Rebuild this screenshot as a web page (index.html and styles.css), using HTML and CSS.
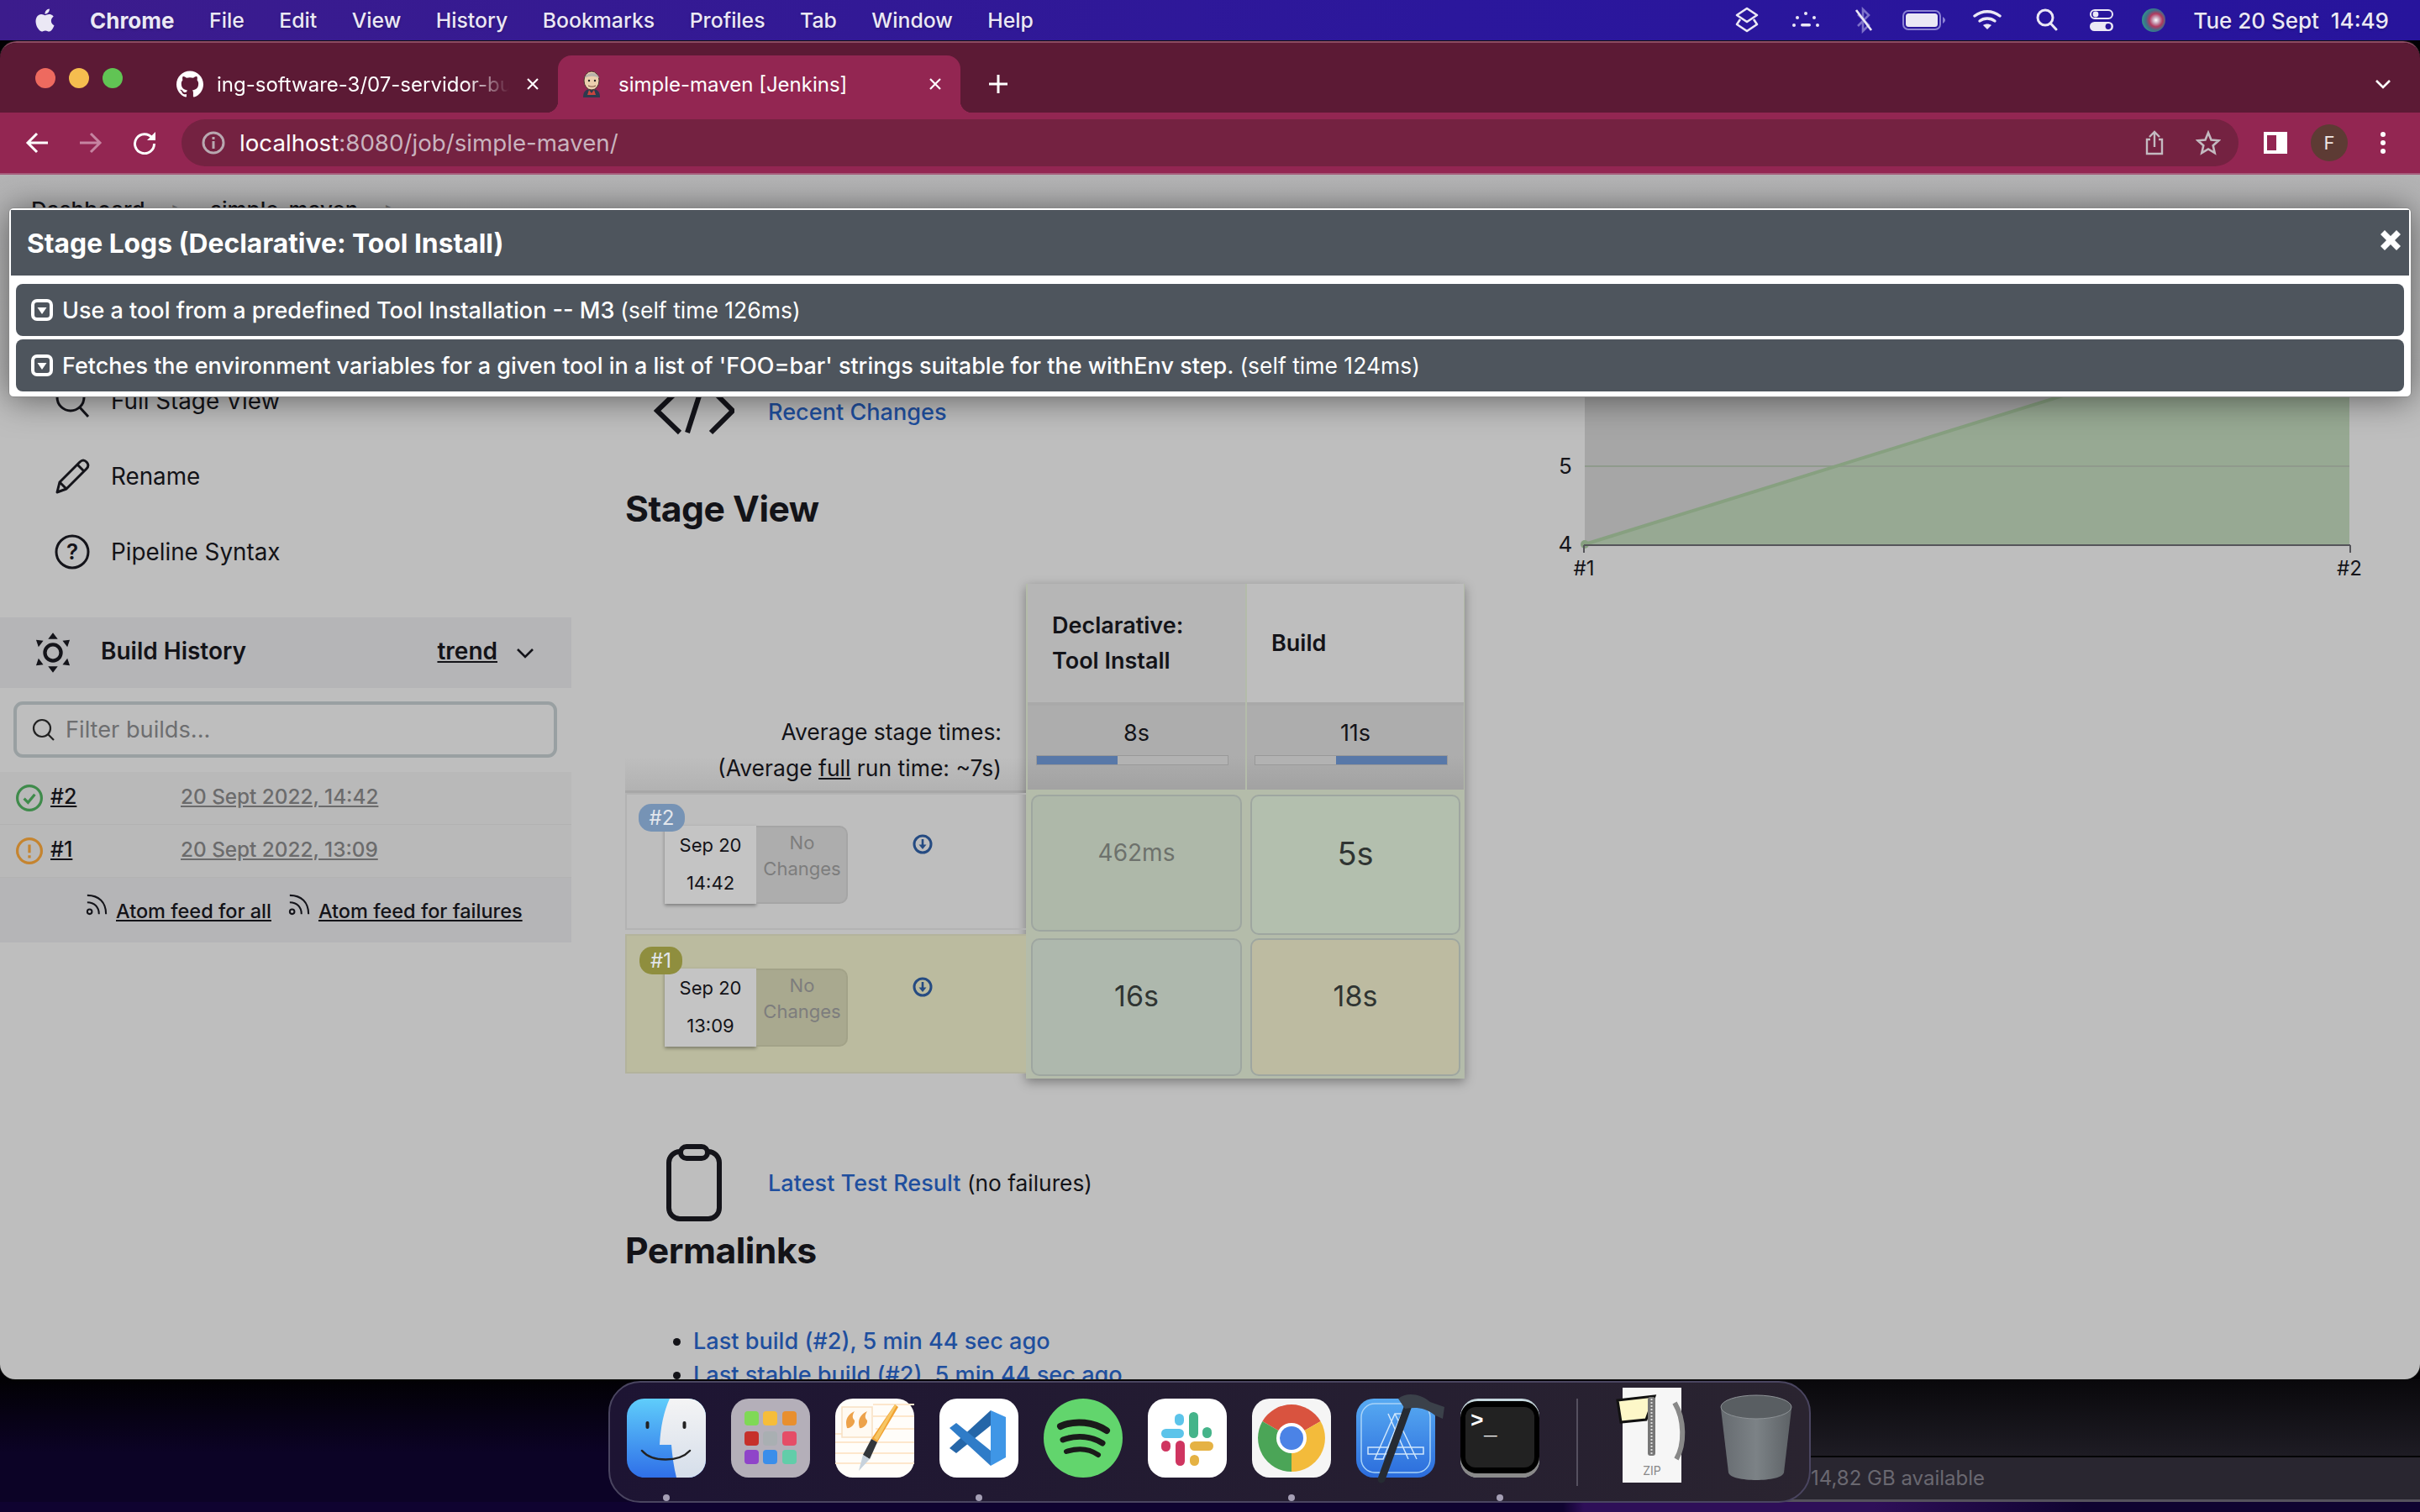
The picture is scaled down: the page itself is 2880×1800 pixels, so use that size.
FILE: index.html
```html
<!DOCTYPE html>
<html lang="en">
<head>
<meta charset="utf-8">
<title>simple-maven [Jenkins]</title>
<link rel="stylesheet" href="styles.css">
</head>
<body>
<header class="menubar">
  <svg class="apple" viewBox="0 0 24 24"><path d="M12.152 6.896c-.948 0-2.415-1.078-3.96-1.04-2.04.027-3.91 1.183-4.961 3.014-2.117 3.675-.546 9.103 1.519 12.09 1.013 1.454 2.208 3.09 3.792 3.039 1.52-.065 2.09-.987 3.935-.987 1.831 0 2.35.987 3.96.948 1.637-.026 2.676-1.48 3.676-2.948 1.156-1.688 1.636-3.325 1.662-3.415-.039-.013-3.182-1.221-3.22-4.857-.026-3.04 2.48-4.494 2.597-4.559-1.429-2.09-3.623-2.324-4.39-2.376-2-.156-3.675 1.09-4.61 1.09zM15.53 3.83c.843-1.012 1.4-2.427 1.245-3.83-1.207.052-2.662.805-3.532 1.818-.78.896-1.454 2.338-1.273 3.714 1.338.104 2.715-.688 3.559-1.701"/></svg>
  <nav class="menus">
    <span class="app">Chrome</span><span>File</span><span>Edit</span><span>View</span><span>History</span><span>Bookmarks</span><span>Profiles</span><span>Tab</span><span>Window</span><span>Help</span>
  </nav>
  <div class="status">
    <svg width="30" height="32" viewBox="0 0 30 32" fill="none" stroke="#ebe8f5" stroke-width="2.6" stroke-linejoin="round"><path d="M15 2 27 10 15 18 3 10Z"/><path d="M7 15 3 21 15 29 27 21 23 15"/></svg>
    <svg width="32" height="24" viewBox="0 0 32 24" fill="#ebe8f5"><circle cx="16" cy="4" r="2"/><circle cx="6" cy="9" r="2"/><circle cx="26" cy="9" r="2"/><circle cx="2" cy="18" r="2"/><circle cx="30" cy="18" r="2"/><rect x="10" y="16" width="12" height="3.5" rx="1.7"/></svg>
    <svg width="22" height="32" viewBox="0 0 22 32" fill="none" stroke="#7d71c9" stroke-width="2.6"><path d="M4 9 17 22 10 29V3L17 10 4 23"/><path d="M2 4 20 28" stroke="#ebe8f5"/></svg>
    <svg width="52" height="24" viewBox="0 0 52 24"><rect x="1" y="1" width="44" height="22" rx="6" fill="none" stroke="#8c82d4" stroke-width="2"/><rect x="4" y="4" width="38" height="16" rx="3.5" fill="#ebe8f5"/><path d="M48 8c2 1 3 3 3 4s-1 3-3 4z" fill="#8c82d4"/></svg>
    <svg width="34" height="24" viewBox="0 0 34 24" fill="none" stroke="#ebe8f5" stroke-width="3.4" stroke-linecap="round"><path d="M2 7C11 0 23 0 32 7"/><path d="M8 13c5-4 13-4 18 0"/><path d="M17 23l-5-5c3-2 7-2 10 0z" fill="#ebe8f5" stroke="none"/></svg>
    <svg width="26" height="28" viewBox="0 0 26 28" fill="none" stroke="#ebe8f5" stroke-width="3"><circle cx="11" cy="11" r="9"/><path d="M17.5 18 24 25" stroke-linecap="round"/></svg>
    <svg width="28" height="26" viewBox="0 0 28 26"><rect x="1" y="1" width="26" height="10" rx="5" fill="none" stroke="#ebe8f5" stroke-width="2"/><circle cx="7" cy="6" r="3.4" fill="#ebe8f5"/><rect y="15" width="28" height="11" rx="5.5" fill="#ebe8f5"/><circle cx="22" cy="20.500" r="3.4" fill="#29149a"/></svg>
    <svg width="28" height="30" viewBox="0 0 28 30"><defs><radialGradient id="siri" cx="60%" cy="50%" r="62%"><stop offset="0" stop-color="#fff"/><stop offset=".22" stop-color="#c9a3b8"/><stop offset=".45" stop-color="#b03a5e"/><stop offset=".7" stop-color="#3f6f8a"/><stop offset="1" stop-color="#2f9a8a"/></radialGradient></defs><circle cx="14" cy="15" r="14" fill="url(#siri)"/></svg>
  </div>
  <span class="clock">Tue 20 Sept&nbsp; 14:49</span>
</header>

<aside class="backwin">
  <div class="back-body"></div>
  <div class="back-status">14,82 GB available</div>
</aside>

<main class="window">
  <div class="tabstrip">
    <div class="lights"><i class="red"></i><i class="yellow"></i><i class="green"></i></div>
    <div class="tab">
      <svg class="favicon" viewBox="0 0 24 24" fill="#fff"><path d="M12 .297c-6.63 0-12 5.373-12 12 0 5.303 3.438 9.8 8.205 11.385.6.113.82-.258.82-.577 0-.285-.01-1.04-.015-2.04-3.338.724-4.042-1.61-4.042-1.61C4.422 18.07 3.633 17.7 3.633 17.7c-1.087-.744.084-.729.084-.729 1.205.084 1.838 1.236 1.838 1.236 1.07 1.835 2.809 1.305 3.495.998.108-.776.417-1.305.76-1.605-2.665-.3-5.466-1.332-5.466-5.93 0-1.31.465-2.38 1.235-3.22-.135-.303-.54-1.523.105-3.176 0 0 1.005-.322 3.3 1.23.96-.267 1.98-.399 3-.405 1.02.006 2.04.138 3 .405 2.28-1.552 3.285-1.23 3.285-1.23.645 1.653.24 2.873.12 3.176.765.84 1.23 1.91 1.23 3.22 0 4.61-2.805 5.625-5.475 5.92.42.36.81 1.096.81 2.22 0 1.606-.015 2.896-.015 3.286 0 .315.21.69.825.57C20.565 22.092 24 17.592 24 12.297c0-6.627-5.373-12-12-12"/></svg>
      <span class="tab-title fade">ing-software-3/07-servidor-build</span>
      <svg class="tab-close" viewBox="0 0 16 16" stroke="#fff" stroke-width="2.200"><path d="M2 2 14 14M14 2 2 14"/></svg>
    </div>
    <div class="tab active">
      <svg class="favicon" viewBox="0 0 32 32"><path d="M6 32c0-7 3-10 10-10s10 3 10 10z" fill="#2c3a4e"/><path d="M13 23l3 4 3-4 2 6h-10z" fill="#c9463f"/><ellipse cx="16" cy="12" rx="9" ry="11" fill="#eccfae" stroke="#4a3a30"/><path d="M8 9c1-7 15-9 17 0-5-3-12-3-17 0z" fill="#b8b2aa"/><circle cx="13" cy="12" r="1.200" fill="#222"/><circle cx="20" cy="12" r="1.200" fill="#222"/><path d="M12 18c3 1.500 6 1.500 9 0" stroke="#7a4a3a" fill="none"/></svg>
      <span class="tab-title">simple-maven [Jenkins]</span>
      <svg class="tab-close" viewBox="0 0 16 16" stroke="#fff" stroke-width="2.200"><path d="M2 2 14 14M14 2 2 14"/></svg>
    </div>
    <svg class="newtab" viewBox="0 0 24 24" stroke="#fff" stroke-width="3"><path d="M12 1V23M1 12H23"/></svg>
    <svg class="tabmenu" viewBox="0 0 20 12" fill="none" stroke="#fff" stroke-width="2.600"><path d="M2 2 10 10 18 2"/></svg>
  </div>

  <div class="toolbar">
    <span class="tb-slot"><svg width="28" height="28" viewBox="0 0 28 28" fill="none" stroke="#fff" stroke-width="3"><path d="M27 14H3M14 3 3 14 14 25"/></svg></span>
    <span class="tb-slot"><svg width="28" height="28" viewBox="0 0 28 28" fill="none" stroke="#c684a1" stroke-width="3"><path d="M1 14H25M14 3 25 14 14 25"/></svg></span>
    <span class="tb-slot"><svg width="28" height="28" viewBox="0 0 28 28" fill="none" stroke="#fff" stroke-width="3"><path d="M23 8a11.500 11.500 0 1 0 2.500 7"/><path d="M27 1v10H17z" fill="#fff" stroke="none"/></svg></span>
    <div class="omnibox">
      <svg class="info" viewBox="0 0 28 28"><circle cx="14" cy="14" r="12" fill="none" stroke="#b8a8b0" stroke-width="3"/><rect x="12.500" y="12" width="3" height="9" fill="#b8a8b0"/><rect x="12.500" y="7" width="3" height="3" fill="#b8a8b0"/></svg>
      <span class="url"><b>localhost</b>:8080/job/simple-maven/</span>
      <span class="tb-slot"><svg width="24" height="30" viewBox="0 0 24 30" fill="none" stroke="#c3bac0" stroke-width="2.400"><path d="M7 11H3V28H21V11H17M12 20V2M6 8 12 2 18 8"/></svg></span>
      <span class="tb-slot"><svg width="30" height="30" viewBox="0 0 30 30" fill="none" stroke="#c3bac0" stroke-width="2.600"><path d="M15 3 18.500 11.500 27.500 12.300 20.700 18.300 22.700 27 15 22.500 7.300 27 9.300 18.300 2.500 12.300 11.500 11.500Z"/></svg></span>
    </div>
    <span class="tb-slot"><svg width="28" height="26" viewBox="0 0 28 26"><rect x="2" y="2" width="24" height="22" fill="none" stroke="#fff" stroke-width="4"/><rect x="15" y="2" width="11" height="22" fill="#fff"/></svg></span>
    <span class="tb-slot"><span class="avatar">F</span></span>
    <span class="tb-slot"><svg width="6" height="26" viewBox="0 0 6 26" fill="#fff"><circle cx="3" cy="3" r="3"/><circle cx="3" cy="13" r="3"/><circle cx="3" cy="23" r="3"/></svg></span>
  </div>

  <div class="page">
    <div class="crumbs"><span>Dashboard</span><i>&gt;</i><span>simple-maven</span><i>&gt;</i></div>
    <div class="content">
      <section class="sidebar">
        <a class="task"><svg viewBox="0 0 44 44" fill="none" stroke="#14141a" stroke-width="3"><circle cx="20" cy="18" r="16"/><path d="M31 30 41 41"/></svg>Full Stage View</a>
        <a class="task"><svg viewBox="0 0 44 44" fill="none" stroke="#14141a" stroke-width="3" stroke-linejoin="round"><path d="M4 41 7 29 31 5c3-3 6-2 8 0s3 5 0 8L15 37Z"/><path d="M28 8 36 16M7 29 15 37"/></svg>Rename</a>
        <a class="task"><svg viewBox="0 0 44 44"><circle cx="22" cy="22" r="19" fill="none" stroke="#14141a" stroke-width="3"/><text x="22" y="31" text-anchor="middle" class="qmark">?</text></svg>Pipeline Syntax</a>

        <div class="bh-head">
          <svg viewBox="0 0 44 50" fill="#14141a"><circle cx="22" cy="25" r="10" fill="none" stroke="#14141a" stroke-width="4.500"/><path d="M22 0 28 8H16ZM22 50 28 42H16ZM1 9 10 10 4 18ZM43 9 34 10 40 18ZM1 41 10 40 4 32ZM43 41 34 40 40 32Z"/></svg>
          <span class="bh-title">Build History</span>
          <a class="bh-trend">trend</a>
          <svg class="chev" viewBox="0 0 22 14" fill="none" stroke="#14141a" stroke-width="2.600"><path d="M2 2 11 11 20 2"/></svg>
        </div>
        <div class="filter">
          <svg viewBox="0 0 28 28" fill="none" stroke="#222" stroke-width="2.200"><circle cx="12" cy="12" r="10"/><path d="M19 19 26 26"/></svg>
          <span>Filter builds...</span>
        </div>
        <div class="build">
          <svg viewBox="0 0 30 30" fill="none" stroke="#3f8b4b" stroke-width="3"><circle cx="15" cy="15" r="13.500"/><path d="M9 15.500 13.500 20 21 11"/></svg>
          <a class="num">#2</a><a class="when">20 Sept 2022, 14:42</a>
        </div>
        <div class="build">
          <svg viewBox="0 0 30 30" fill="none" stroke="#c5842f" stroke-width="3"><circle cx="15" cy="15" r="13.500"/><path d="M15 8V17M15 20V23"/></svg>
          <a class="num">#1</a><a class="when">20 Sept 2022, 13:09</a>
        </div>
        <div class="feeds">
          <svg viewBox="0 0 28 28" fill="none" stroke="#14141a" stroke-width="2.200"><circle cx="5" cy="23" r="3"/><path d="M2 11c9 0 15 6 15 15M2 2c15 0 24 9 24 24"/></svg><a>Atom feed for all</a>
          <svg viewBox="0 0 28 28" fill="none" stroke="#14141a" stroke-width="2.200"><circle cx="5" cy="23" r="3"/><path d="M2 11c9 0 15 6 15 15M2 2c15 0 24 9 24 24"/></svg><a>Atom feed for failures</a>
        </div>
      </section>

      <section class="main">
        <div class="linkrow">
          <span class="linkicon"><svg width="96" height="64" viewBox="0 0 96 64" fill="none" stroke="#14141a" stroke-width="6"><path d="M31 5 4 31 31 57"/><path d="M40 57 58 1"/><path d="M68 5 94 31 68 57"/></svg></span>
          <a class="lnk">Recent Changes</a>
        </div>
        <h2 class="stage-title">Stage View</h2>

        <div class="stage">
          <div class="stage-left">
            <div class="avg-label">Average stage times:<br>(Average <u>full</u> run time: ~7s)</div>
            <div class="run first">
              <span class="badge blue">#2</span>
              <div class="stamp"><span>Sep 20</span><span>14:42</span></div>
              <div class="nochg">No<br>Changes</div>
              <svg class="dl" viewBox="0 0 24 24"><circle cx="12" cy="12" r="10" fill="none" stroke="#254b82" stroke-width="3"/><path d="M12 6V15" stroke="#254b82" stroke-width="2.600"/><path d="M7.500 12.500H16.500L12 18Z" fill="#254b82"/></svg>
            </div>
            <div class="run warn">
              <span class="badge olive">#1</span>
              <div class="stamp"><span>Sep 20</span><span>13:09</span></div>
              <div class="nochg">No<br>Changes</div>
              <svg class="dl" viewBox="0 0 24 24"><circle cx="12" cy="12" r="10" fill="none" stroke="#254b82" stroke-width="3"/><path d="M12 6V15" stroke="#254b82" stroke-width="2.600"/><path d="M7.500 12.500H16.500L12 18Z" fill="#254b82"/></svg>
            </div>
          </div>
          <div class="stage-box">
            <div class="col one">
              <div class="head">Declarative:<br>Tool Install</div>
              <div class="avg"><span>8s</span><div class="bar"><i class="fill-a"></i></div></div>
              <div class="cell c11"><span class="dim">462ms</span></div>
              <div class="cell c21"><span>16s</span></div>
            </div>
            <div class="col two">
              <div class="head">Build</div>
              <div class="avg"><span>11s</span><div class="bar"><i class="fill-b"></i></div></div>
              <div class="cell c12"><span class="big">5s</span></div>
              <div class="cell c22"><span>18s</span></div>
            </div>
          </div>
        </div>

        <div class="linkrow test">
          <span class="linkicon"><svg width="66" height="92" viewBox="0 0 66 92" fill="none" stroke="#14141a" stroke-width="6"><rect x="3" y="9" width="60" height="80" rx="13"/><rect x="17" y="3" width="32" height="14" rx="7" fill="#bebebe"/></svg></span>
          <span><a class="lnk">Latest Test Result</a> (no failures)</span>
        </div>
        <h2 class="perma">Permalinks</h2>
        <ul class="plist">
          <li><a class="lnk">Last build (#2), 5 min 44 sec ago</a></li>
          <li><a class="lnk">Last stable build (#2), 5 min 44 sec ago</a></li>
        </ul>
      </section>

      <section class="trend">
        <svg width="1120" height="400" viewBox="0 0 1120 400">
          <rect x="126" y="0" width="910" height="358" fill="#a6a6a6"/>
          <path d="M126 358 1036 75V358Z" fill="#97a993"/>
          <path d="M126 265H1036" stroke="#8f9a8c" stroke-width="2"/>
          <path d="M126 358 1036 75" stroke="#87a080" stroke-width="4"/>
          <circle cx="126" cy="358" r="5" fill="#87a080"/>
          <path d="M125 359H1037M125 359V368M1037 359V368" fill="none" stroke="#55555a" stroke-width="2"/>
          <text x="103" y="367" class="axis" text-anchor="middle">4</text>
          <text x="103" y="274" class="axis" text-anchor="middle">5</text>
          <text x="125" y="395" class="axis small" text-anchor="middle">#1</text>
          <text x="1036" y="395" class="axis small" text-anchor="middle">#2</text>
        </svg>
      </section>
    </div>

    <div class="modal">
      <div class="modal-head">
        <span>Stage Logs (Declarative: Tool Install)</span>
        <svg viewBox="0 0 26 24" fill="#fff"><path d="M1 5 6 0 13 7 20 0 25 5 18 12 25 19 20 24 13 17 6 24 1 19 8 12Z"/></svg>
      </div>
      <div class="log">
        <svg viewBox="0 0 26 26"><rect x="2" y="2" width="22" height="22" rx="5" fill="none" stroke="#fff" stroke-width="4"/><path d="M7.500 10H18.500L13 18Z" fill="#fff"/></svg>
        <span>Use a tool from a predefined Tool Installation -- M3</span><small>(self time 126ms)</small>
      </div>
      <div class="log">
        <svg viewBox="0 0 26 26"><rect x="2" y="2" width="22" height="22" rx="5" fill="none" stroke="#fff" stroke-width="4"/><path d="M7.500 10H18.500L13 18Z" fill="#fff"/></svg>
        <span>Fetches the environment variables for a given tool in a list of 'FOO=bar' strings suitable for the withEnv step.</span><small>(self time 124ms)</small>
      </div>
    </div>
  </div>
</main>

<footer class="dock">
  <span class="dock-item on"><svg viewBox="0 0 94 94"><defs><linearGradient id="fb" x1="0" y1="0" x2="0" y2="1"><stop offset="0" stop-color="#5fcdfb"/><stop offset="1" stop-color="#2f6fe8"/></linearGradient><linearGradient id="fw" x1="0" y1="0" x2="0" y2="1"><stop offset="0" stop-color="#f4f4f5"/><stop offset="1" stop-color="#d5deea"/></linearGradient></defs><rect width="94" height="94" rx="21" fill="url(#fb)"/><path d="M51 0H73A21 21 0 0 1 94 21V73A21 21 0 0 1 73 94H59C56 82 54 68 53 55H39C40 34 44 15 51 0Z" fill="url(#fw)"/><rect x="22.500" y="27" width="4" height="9" rx="2" fill="#222"/><rect x="66.500" y="27" width="4" height="9" rx="2" fill="#222"/><path d="M18 62C30 76 62 76 75 62" fill="none" stroke="#222" stroke-width="2.500" stroke-linecap="round"/></svg></span>
  <span class="dock-item"><svg viewBox="0 0 94 94"><rect width="94" height="94" rx="21" fill="#b4afb9"/><rect x="16" y="15" width="17" height="17" rx="4" fill="#7fd956"/><rect x="38" y="15" width="17" height="17" rx="4" fill="#f6bd3a"/><rect x="61" y="15" width="17" height="17" rx="4" fill="#e88f2e"/><rect x="16" y="39" width="17" height="17" rx="4" fill="#c6302a"/><rect x="38" y="39" width="17" height="17" rx="4" fill="#a9afb2"/><rect x="61" y="39" width="17" height="17" rx="4" fill="#e54d67"/><rect x="16" y="61" width="17" height="17" rx="4" fill="#8f44c9"/><rect x="38" y="61" width="17" height="17" rx="4" fill="#3a8eea"/><rect x="61" y="61" width="17" height="17" rx="4" fill="#62cda9"/></svg></span>
  <span class="dock-item"><svg viewBox="0 0 94 94"><rect width="94" height="94" rx="21" fill="#fffdf9"/><path d="M45 7H94M45 21H94M48 36H94M0 42H40M0 52H94M0 65H94M0 77H94" stroke="#fde7cc" stroke-width="2"/><rect x="8" y="10" width="36" height="36" fill="#fffaf2" stroke="#f8dfc2" stroke-width="1.500"/><path d="M14 35c-3-10 1-16 9-20-3 5-3 8 0 11 1 5-6 10-9 9zM29 35c-3-10 1-16 9-20-3 5-3 8 0 11 1 5-6 10-9 9z" fill="#eda24a"/><path d="M71 7 75 10 50 52 43 48Z" fill="#f0a030"/><path d="M71 7 73 8.500 50 50 46 47Z" fill="#f7c664"/><path d="M43 48 50 52 41 72 33 67Z" fill="#33363a"/><path d="M33 67 41 72 28 86Z" fill="#c7d2dc"/></svg></span>
  <span class="dock-item on"><svg viewBox="0 0 94 94"><rect width="94" height="94" rx="21" fill="#fff"/><path d="M61 14V32L20 65 12 59Z" fill="#2566a8"/><path d="M12 35 20 29 61 62V80Z" fill="#2f7cc8"/><path d="M61 14 79 22V70L61 80Z" fill="#3f96e6"/></svg></span>
  <span class="dock-item"><svg viewBox="0 0 94 94"><circle cx="47" cy="47" r="47" fill="#62d56d"/><g fill="none" stroke="#1a1a1a" stroke-linecap="round"><path d="M20 33C38 25 60 28 75 38" stroke-width="8"/><path d="M23 49C40 43 57 45 70 53" stroke-width="7"/><path d="M27 63C42 58 55 60 65 67" stroke-width="6"/></g></svg></span>
  <span class="dock-item"><svg viewBox="0 0 94 94"><rect width="94" height="94" rx="21" fill="#fff"/><rect x="16" y="36" width="27" height="11" rx="5.500" fill="#5cc4ea"/><rect x="32" y="18" width="11" height="14" rx="5.500" fill="#5cc4ea"/><rect x="49" y="16" width="11" height="31" rx="5.500" fill="#45b48a"/><rect x="65" y="34" width="11" height="13" rx="5.500" fill="#45b48a"/><rect x="50" y="51" width="28" height="11" rx="5.500" fill="#e5b244"/><rect x="50" y="67" width="11" height="13" rx="5.500" fill="#e5b244"/><rect x="33" y="50" width="11" height="30" rx="5.500" fill="#cf3560"/><rect x="16" y="50" width="11" height="13" rx="5.500" fill="#cf3560"/></svg></span>
  <span class="dock-item on"><svg viewBox="0 0 94 94"><rect width="94" height="94" rx="21" fill="#f5f5f5"/><path d="M47 47 12.400 27A40 40 0 0 1 81.600 27Z" fill="#d9533f"/><path d="M47 47 12.400 27A40 40 0 0 0 47 87Z" fill="#4ba557"/><path d="M47 47 81.600 27A40 40 0 0 1 47 87Z" fill="#f3bb3b"/><circle cx="47" cy="47" r="18" fill="#fff"/><circle cx="47" cy="47" r="14" fill="#4b83e6"/></svg></span>
  <span class="dock-item"><svg viewBox="0 0 94 94"><defs><linearGradient id="xc" x1="0" y1="0" x2="0" y2="1"><stop offset="0" stop-color="#57aaf2"/><stop offset="1" stop-color="#2b6cdc"/></linearGradient></defs><rect width="94" height="94" rx="21" fill="url(#xc)"/><rect x="6" y="6" width="82" height="82" rx="16" fill="none" stroke="#a9d4f8" stroke-width="1.500"/><g fill="none" stroke="#cfe6fb" stroke-width="1.500"><path d="M22 72 46 18 54 18 32 72ZM72 72 46 18M62 72 38 18M14 58H80V66H14Z"/></g><path d="M30 96 62 8" stroke="#262b33" stroke-width="9" stroke-linecap="round"/><path d="M50 0C60-8 76-6 88 4L105 10 103 24 94 20C82 10 70 10 58 12Z" fill="#3b414a"/></svg></span>
  <span class="dock-item on"><svg viewBox="0 0 94 94"><rect width="94" height="94" rx="21" fill="#c5d7dd"/><rect y="3" width="94" height="91" rx="20" fill="#8a8a8a"/><rect y="3" width="94" height="86" rx="20" fill="#000"/><rect x="6" y="10" width="82" height="72" rx="12" fill="#222"/><text x="12" y="34" class="term">&gt;</text><text x="28" y="42" class="term">_</text></svg></span>
  <i class="dock-sep"></i>
  <span class="dock-item"><svg viewBox="0 0 94 94"><path d="M12 -13H82V100H12Z" fill="#f6f6f6"/><path d="M74 5C86 25 86 55 76 72" fill="none" stroke="#888" stroke-width="6"/><path d="M6 2 50 -3 40 25 10 28Z" fill="#fdf7c8" stroke="#111" stroke-width="3"/><rect x="42" y="-2" width="9" height="70" rx="3" fill="#777"/><path d="M46.500 0V66" stroke="#ddd" stroke-width="2" stroke-dasharray="2 2"/><text x="47" y="91" text-anchor="middle" class="zip">ZIP</text></svg></span>
  <span class="dock-item"><svg viewBox="0 0 94 94"><defs><linearGradient id="tr" x1="0" y1="0" x2="1" y2="0"><stop offset="0" stop-color="#666b70"/><stop offset=".5" stop-color="#7c8286"/><stop offset="1" stop-color="#5d6266"/></linearGradient></defs><path d="M5 12 14 88C16 100 78 100 80 88L89 12Z" fill="url(#tr)"/><ellipse cx="47" cy="10" rx="42" ry="14" fill="#595e62" stroke="#8d9296" stroke-width="1"/></svg></span>
</footer>
</body>
</html>
```

FILE: styles.css
```css
* { box-sizing: border-box; }
html, body { margin: 0; padding: 0; }
body {
  position: relative;
  width: 2880px;
  height: 1800px;
  overflow: hidden;
  font-family: Inter, "Liberation Sans", sans-serif;
  color: #131318;
  background:
    linear-gradient(90deg, #0f0330 1860px, #2e0f58 1885px, #2e0f58 2230px, #0f0330 2480px) bottom / 100% 12px no-repeat,
    linear-gradient(180deg, #020104 1642px, #0c0326 1730px);
}
a { color: inherit; }

/* menu bar */
.menubar {
  height: 48px;
  display: flex;
  align-items: center;
  padding-left: 40px;
  color: #ebe8f5;
  font-size: 24.800px;
  font-weight: 500;
  background: linear-gradient(90deg, #3c1c8c, #2b179c 60%, #27149c);
  text-shadow: 0 1px 3px rgba(0,0,0,.25);
}
.apple { width: 27px; height: 32px; fill: #ebe8f5; }
.menus { display: flex; gap: 41.500px; margin-left: 40px; }
.app { font-weight: 700; font-size: 26px; }
.status {
  display: grid;
  grid-template-columns: 70px 69px 69px 76px 74px 67px 63px 62px;
  justify-items: center;
  align-items: center;
  margin-left: auto;
}
.clock { margin: 0 37px 0 16px; white-space: nowrap; font-size: 26px; }

/* window behind */
.backwin {
  position: absolute;
  left: 2000px;
  top: 1642px;
  width: 880px;
  height: 146px;
  display: flex;
  flex-direction: column;
}
.back-body { flex: 1; background: linear-gradient(180deg, #09080b, #1e1c24); }
.back-status {
  height: 55px;
  border-top: 2px solid #050506;
  border-bottom: 3px solid #55525c;
  background: #292630;
  color: #6a6870;
  font-size: 24px;
  font-weight: 400;
  line-height: 50px;
  padding-left: 155px;
}

/* browser window */
.window {
  position: absolute;
  left: 0;
  top: 49px;
  width: 2880px;
  height: 1593px;
  display: flex;
  flex-direction: column;
  overflow: hidden;
  border-radius: 20px 20px 18px 18px;
  border-top: 2px solid #8b4a63;
  box-shadow: 0 0 0 1px #111;
}
.tabstrip {
  height: 83px;
  flex: none;
  display: flex;
  align-items: flex-end;
  background: #5c1a35;
  color: #fff;
  font-size: 24px;
}
.lights { display: flex; gap: 16px; align-self: flex-start; padding: 30px 0 0 42px; width: 188px; }
.lights i { width: 24px; height: 24px; border-radius: 50%; }
.red { background: #ee6a5f; }
.yellow { background: #f5bd4f; }
.green { background: #61c454; }
.tab {
  position: relative;
  width: 476px;
  height: 68px;
  display: flex;
  align-items: center;
  padding: 0 22px 0 22px;
}
.tab.active {
  width: 479px;
  background: #932652;
  border-radius: 16px 16px 0 0;
  padding-left: 24px;
}
.tab.active::before, .tab.active::after {
  content: "";
  position: absolute;
  bottom: 0;
  width: 14px;
  height: 14px;
}
.tab.active::before { left: -14px; background: radial-gradient(circle at 0 0, transparent 14px, #932652 14.500px); }
.tab.active::after { right: -14px; background: radial-gradient(circle at 100% 0, transparent 14px, #932652 14.500px); }
.favicon { width: 32px; height: 32px; flex: none; }
.tab-title { margin-left: 16px; flex: 1; overflow: hidden; white-space: nowrap; }
.fade { mask-image: linear-gradient(90deg, #000 85%, transparent); }
.tab-close { width: 16px; height: 16px; flex: none; margin-left: 20px; }
.newtab { width: 24px; height: 24px; margin: 0 0 22px 33px; }
.tabmenu { width: 20px; height: 12px; margin: 0 34px 28px auto; }

.toolbar {
  height: 74px;
  flex: none;
  display: flex;
  align-items: center;
  padding: 0 12px;
  background: #932652;
  border-bottom: 2px solid #a65e7c;
}
.tb-slot { width: 64px; height: 56px; display: flex; align-items: center; justify-content: center; flex: none; }
.omnibox {
  flex: 1;
  height: 56px;
  margin: 0 12px;
  padding: 0 4px 0 24px;
  display: flex;
  align-items: center;
  background: #742241;
  border-radius: 28px;
}
.info { width: 28px; height: 28px; flex: none; }
.url { flex: 1; margin-left: 17px; font-size: 27.700px; color: #c9b3be; }
.url b { font-weight: 400; color: #fff; }
.avatar {
  width: 44px; height: 44px;
  border-radius: 50%;
  background: #5d3b34;
  color: #efe7e4;
  font-size: 22px;
  line-height: 44px;
  text-align: center;
}

/* page */
.page {
  position: relative;
  flex: 1;
  min-height: 0;
  overflow: hidden;
  background: linear-gradient(180deg, #b4b4b5, #bebebe 260px);
  font-size: 27px;
}
.crumbs {
  height: 82px;
  display: flex;
  align-items: center;
  gap: 30px;
  padding-left: 37px;
  font-size: 26px;
  font-weight: 500;
}
.crumbs i { font-style: normal; color: #777; }
.content { display: flex; }

.sidebar { width: 680px; flex: none; padding-top: 142px; }
.task {
  height: 90px;
  display: flex;
  align-items: center;
  gap: 24px;
  padding-left: 64px;
  font-size: 27.800px;
}
.task svg { width: 44px; height: 44px; flex: none; }
.qmark { font: 600 26px Inter, sans-serif; fill: #14141a; }
.bh-head {
  height: 84px;
  margin-top: 33px;
  display: flex;
  align-items: center;
  padding: 0 44px 5px 42px;
  background: #b5b5b7;
  font-weight: 600;
}
.bh-head > svg:first-child { width: 42px; height: 48px; flex: none; margin-bottom: -5px; }
.bh-title { margin-left: 36px; flex: 1; font-size: 28px; }
.bh-trend { font-size: 28px; text-decoration: underline; }
.chev { width: 22px; height: 14px; margin-left: 22px; margin-bottom: -6px; }
.filter {
  height: 67px;
  margin: 16px 17px 17px 16px;
  display: flex;
  align-items: center;
  gap: 12px;
  padding-left: 18px;
  border: 4px solid #99a0a2;
  border-radius: 11px;
  color: #6d6e70;
  font-size: 27.200px;
}
.filter svg { width: 28px; height: 28px; }
.build {
  height: 63px;
  display: flex;
  align-items: center;
  padding-left: 19px;
  background: #b9b9b9;
  border-bottom: 1px solid #b2b2b2;
  font-size: 25px;
}
.build svg { width: 32px; height: 32px; flex: none; }
.num { width: 155px; margin: 0 0 5px 9px; font-weight: 500; text-decoration: underline; }
.when { margin-bottom: 5px; color: #6b6b6c; font-weight: 500; text-decoration: underline; font-size: 24.300px; }
.feeds {
  height: 77px;
  display: flex;
  align-items: center;
  padding-left: 102px;
  background: #b5b5b7;
  font-size: 23.500px;
  font-weight: 500;
}
.feeds a { text-decoration: underline; margin: 2px 20px 0 10px; }
.feeds svg { width: 26px; height: 26px; flex: none; margin-bottom: 14px; }

.main { width: 1080px; flex: none; padding: 155px 0 0 64px; }
.linkrow { height: 90px; display: flex; align-items: center; font-size: 26.300px; }
.linkicon { width: 170px; display: flex; justify-content: center; flex: none; padding-right: 6px; }
.lnk { color: #1f4f9e; font-weight: 500; font-size: 27.100px; }
h2 { margin: 0; font-size: 42.700px; font-weight: 700; line-height: 60px; letter-spacing: -.5px; }
.stage-title { margin: 41px 0 59px; }

.stage { display: flex; height: 589px; align-items: flex-start; }
.stage-left { width: 477px; flex: none; padding-top: 145px; }
.avg-label {
  height: 104px;
  padding: 10px 29px 0 0;
  text-align: right;
  line-height: 43px;
  font-size: 26.500px;
  border-bottom: 3px solid #a7a7a7;
  background: linear-gradient(180deg, transparent 60%, #b2b2b2);
}
.run {
  position: relative;
  display: flex;
  align-items: flex-start;
  height: 163px;
  padding: 39px 0 0 45px;
  margin-bottom: 5px;
  border: 2px solid #b3b3b3;
  border-right: 0;
}
.run.first { padding-top: 37px; }
.run.warn { height: 166px; padding-top: 39px; background: #bbbb9f; border-color: #b3b39c; }
.badge {
  position: absolute;
  left: 14px;
  top: 11px;
  width: 55px;
  height: 33px;
  border-radius: 15px;
  color: #e2e6ec;
  text-align: center;
  font-size: 24px;
  line-height: 33px;
}
.blue { background: #7693b5; }
.olive { left: 15px; top: 13px; width: 51px; background: #8f8e3e; }
.stamp {
  width: 109px;
  height: 93px;
  display: flex;
  flex-direction: column;
  justify-content: space-between;
  align-items: center;
  padding: 8px 0 10px;
  background: #c4c4c4;
  box-shadow: 0 2px 4px rgba(0,0,0,.35);
  font-size: 22px;
  line-height: 30px;
}
.nochg {
  width: 109px;
  height: 93px;
  padding: 3px 0 0 2px;
  background: #adadad;
  border: 2px solid #a5a5a5;
  border-left: 0;
  border-radius: 0 10px 10px 0;
  color: #7d7d7d;
  text-align: center;
  font-size: 22px;
  line-height: 31px;
}
.run.warn .nochg { background: #a9a98f; border-color: #a2a288; }
.dl { width: 24px; height: 24px; margin: 10px 0 0 77px; flex: none; }

.stage-box {
  width: 522px;
  height: 589px;
  display: flex;
  gap: 2px;
  padding: 0 2px;
  background: #b4bcaa;
  box-shadow: 0 4px 12px rgba(0,0,0,.35);
}
.col { width: 258px; flex: none; display: flex; flex-direction: column; }
.col.one { width: 259px; }
.head {
  height: 145px;
  display: flex;
  align-items: center;
  padding-left: 29px;
  border-bottom: 4px solid #a9a9a9;
  background: #bebebe;
  font-size: 27px;
  font-weight: 600;
  line-height: 42px;
}
.col.one .head { display: block; padding-top: 29px; background: #b6b6b6; }
.avg {
  height: 100px;
  padding-top: 14px;
  text-align: center;
  background: linear-gradient(180deg, #adadad 60%, #a2a2a2);
  margin-bottom: 6px;
  font-size: 27px;
  line-height: 38px;
}
.bar {
  height: 10px;
  margin: 8px 21px 0 11px;
  display: flex;
  background: #b2b2b2;
  outline: 1px solid #999;
}
.col.two .bar { margin: 8px 20px 0 10px; }
.bar i { display: block; height: 10px; background: #5878a8; }
.fill-a { width: 96px; }
.fill-b { width: 132px; margin-left: 96px; }
.cell {
  display: flex;
  align-items: center;
  justify-content: center;
  margin: 0 4px;
  border: 2px solid #9ea6a0;
  border-radius: 10px;
  font-size: 34px;
  color: #2f3432;
}
.c11 { height: 163px; background: #aeb8a9; margin-bottom: 8px; }
.c21 { height: 164px; background: #aeb8ad; }
.c12 { height: 167px; background: #b3bfae; margin-bottom: 4px; }
.c22 { height: 164px; background: #bdbba1; }
.cell span { margin-bottom: 28px; }
.cell .dim { margin-bottom: 25px; color: #6d716c; font-size: 28px; }
.big { font-size: 38px; }

.test { margin-top: 79px; }
.perma { margin-top: 6px; }
.plist { margin: 58px 0 0; padding: 0 0 0 81px; line-height: 40px; }

.trend { flex: none; width: 1120px; }
.axis { font: 400 26px Inter, sans-serif; fill: #15151a; }
.small { font-size: 24px; }

/* modal */
.modal {
  position: absolute;
  left: 10px;
  top: 39px;
  width: 2860px;
  height: 226px;
  padding: 2px;
  border: 1px solid #888;
  border-radius: 6px;
  background: #fff;
  box-shadow: 0 2px 40px rgba(0,0,0,.5);
  color: #fff;
  font-size: 27px;
}
.modal-head {
  height: 78px;
  display: flex;
  align-items: center;
  justify-content: space-between;
  padding: 0 9px 0 19px;
  background: #4e555d;
  font-size: 31.800px;
  font-weight: 700;
}
.modal-head svg { width: 26px; height: 24px; margin-bottom: 6px; }
.log {
  height: 62px;
  margin: 10px 6px -6px 6px;
  display: flex;
  align-items: center;
  padding-left: 18px;
  background: #4e555d;
  border-radius: 8px;
  font-weight: 500;
}
.log svg { width: 26px; height: 26px; margin-right: 11px; flex: none; }
.log small { margin-left: 7px; font-size: 26.500px; font-weight: 400; }

/* dock */
.dock {
  position: absolute;
  left: 724px;
  top: 1644px;
  width: 1431px;
  height: 145px;
  display: flex;
  gap: 30px;
  padding: 19px 0 0 20px;
  background: linear-gradient(90deg, #1d1433, #2a2430);
  border: 2px solid #4a4560;
  border-radius: 38px;
}
.dock-item { position: relative; width: 94px; height: 94px; flex: none; }
.dock-item svg { width: 94px; height: 94px; display: block; overflow: visible; }
.dock-item.on::after {
  content: "";
  position: absolute;
  left: 43px;
  top: 114px;
  width: 8px;
  height: 8px;
  border-radius: 50%;
  background: #a59fb5;
}
.dock-sep { width: 2px; height: 104px; margin: 0 11px 0 14px; background: #55505f; flex: none; }
.term { font: 700 26px "Liberation Mono", monospace; fill: #fff; }
.zip { font: 400 14px Inter, sans-serif; fill: #888; }
```
